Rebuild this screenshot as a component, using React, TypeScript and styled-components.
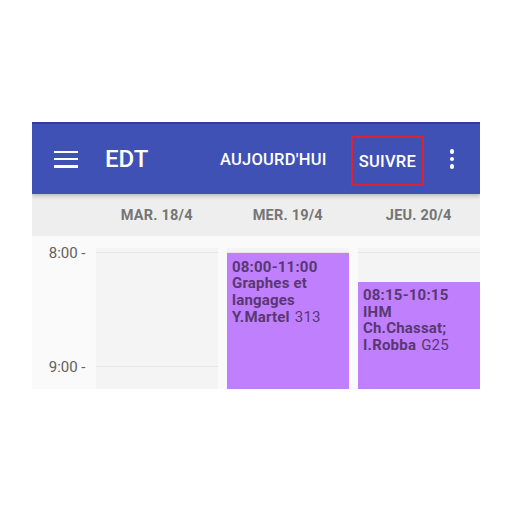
import React from 'react';
import styled, { createGlobalStyle } from 'styled-components';

const Global = createGlobalStyle`
  html, body { margin: 0; padding: 0; background: #ffffff; }
  body { font-family: Roboto, "Noto Sans", sans-serif; }
  * { box-sizing: border-box; }
`;

const Page = styled.div`
  width: 512px;
  height: 512px;
  padding: 122px 32px 0;
  background: #ffffff;
`;

const Screen = styled.div`
  width: 448px;
  height: 267px;
  overflow: hidden;
  display: flex;
  flex-direction: column;
  background: #fafafa;
`;

const StatusEdge = styled.div`
  flex: none;
  height: 2px;
  background: #303f9f;
`;

const Toolbar = styled.header`
  flex: none;
  height: 70px;
  display: flex;
  align-items: center;
  background: #3f51b5;
  color: #ffffff;
  position: relative;
  z-index: 2;
  box-shadow: 0 2px 4px rgba(0, 0, 0, 0.22);
`;

const MenuButton = styled.div`
  margin-left: 22px;
  width: 24px;
  height: 17px;
  display: flex;
  flex-direction: column;
  justify-content: space-between;
`;

const MenuLine = styled.span`
  display: block;
  height: 2.6px;
  background: #ffffff;
`;

const Title = styled.h1`
  margin: 0 0 0 27px;
  flex: 1;
  font-size: 24px;
  font-weight: 500;
  line-height: 1;
`;

const Action = styled.div<{ $outlined?: boolean }>`
  height: 50px;
  display: flex;
  align-items: center;
  padding: 0 6px;
  margin-top: ${(p) => (p.$outlined ? '4px' : '0')};
  border: 2px solid ${(p) => (p.$outlined ? '#e3202d' : 'transparent')};
  font-size: 16.5px;
  font-weight: 500;
  letter-spacing: 0.25px;
  white-space: nowrap;
`;

const ActionGap = styled.div<{ $w: number }>`
  width: ${(p) => p.$w}px;
  flex: none;
`;

const Overflow = styled.div`
  width: 48px;
  margin: 0 4px;
  display: flex;
  flex-direction: column;
  align-items: center;
  gap: 3px;
`;

const Dot = styled.span`
  width: 4.5px;
  height: 4.5px;
  border-radius: 50%;
  background: #ffffff;
`;

const COLS = '54.5px repeat(3, 121.5px)';

const DayHeader = styled.div`
  flex: none;
  height: 42px;
  display: grid;
  grid-template-columns: ${COLS};
  column-gap: 9.5px;
  align-items: center;
  background: #eeeeee;
`;

const DayLabel = styled.div`
  text-align: center;
  font-size: 14.5px;
  font-weight: 700;
  color: #757575;
  letter-spacing: 0.2px;
`;

const Body = styled.div`
  flex: 1;
  min-height: 0;
  display: grid;
  grid-template-columns: ${COLS};
  column-gap: 9.5px;
  padding-top: 12px;
`;

const Gutter = styled.div`
  margin-top: -5px;
  padding-right: 1px;
  text-align: right;
`;

const TimeLabel = styled.div`
  height: 114px;
  line-height: 20px;
  font-size: 15px;
  color: #616161;
`;

const DayColumn = styled.div`
  position: relative;
  background: #f4f4f4;
  padding-top: 4px;
`;

const HourSlot = styled.div`
  height: 114px;
  border-top: 1px solid #e6e6e6;
`;

const Event = styled.div`
  position: absolute;
  left: 0;
  right: 0;
  background: #c07ffc;
  color: #583872;
  padding: 5.5px 5px 0;
  font-size: 15px;
  line-height: 16.7px;
  font-weight: 700;
  letter-spacing: 0.2px;
  overflow: hidden;
`;

const Room = styled.span`
  font-weight: 400;
  margin-left: 5px;
`;

const HOUR = 114;
const START = 8 * 60;

type Ev = { start: string; end: string; lines: string[]; last: string; room: string };

const toMin = (t: string) => {
  const [h, m] = t.split(':').map(Number);
  return h * 60 + m;
};

const days: { label: string; events: Ev[] }[] = [
  { label: 'MAR. 18/4', events: [] },
  {
    label: 'MER. 19/4',
    events: [{ start: '08:00', end: '11:00', lines: ['Graphes et', 'langages'], last: 'Y.Martel', room: '313' }],
  },
  {
    label: 'JEU. 20/4',
    events: [{ start: '08:15', end: '10:15', lines: ['IHM', 'Ch.Chassat;'], last: 'I.Robba', room: 'G25' }],
  },
];

export default function App() {
  return (
    <Page>
      <Global />
      <Screen>
        <StatusEdge />
        <Toolbar>
          <MenuButton>
            <MenuLine />
            <MenuLine />
            <MenuLine />
          </MenuButton>
          <Title>EDT</Title>
          <Action>AUJOURD'HUI</Action>
          <ActionGap $w={16} />
          <Action $outlined>SUIVRE</Action>
          <Overflow>
            <Dot />
            <Dot />
            <Dot />
          </Overflow>
        </Toolbar>
        <DayHeader>
          <div />
          {days.map((d) => (
            <DayLabel key={d.label}>{d.label}</DayLabel>
          ))}
        </DayHeader>
        <Body>
          <Gutter>
            <TimeLabel>8:00 -</TimeLabel>
            <TimeLabel>9:00 -</TimeLabel>
          </Gutter>
          {days.map((d) => (
            <DayColumn key={d.label}>
              <HourSlot />
              <HourSlot />
              {d.events.map((e) => {
                const top = 5 + ((toMin(e.start) - START) * HOUR) / 60;
                const height = ((toMin(e.end) - toMin(e.start)) * HOUR) / 60;
                return (
                  <Event key={e.start} style={{ top, height }}>
                    <div>
                      {e.start}-{e.end}
                    </div>
                    {e.lines.map((l) => (
                      <div key={l}>{l}</div>
                    ))}
                    <div>
                      {e.last}
                      <Room>{e.room}</Room>
                    </div>
                  </Event>
                );
              })}
            </DayColumn>
          ))}
        </Body>
      </Screen>
    </Page>
  );
}
